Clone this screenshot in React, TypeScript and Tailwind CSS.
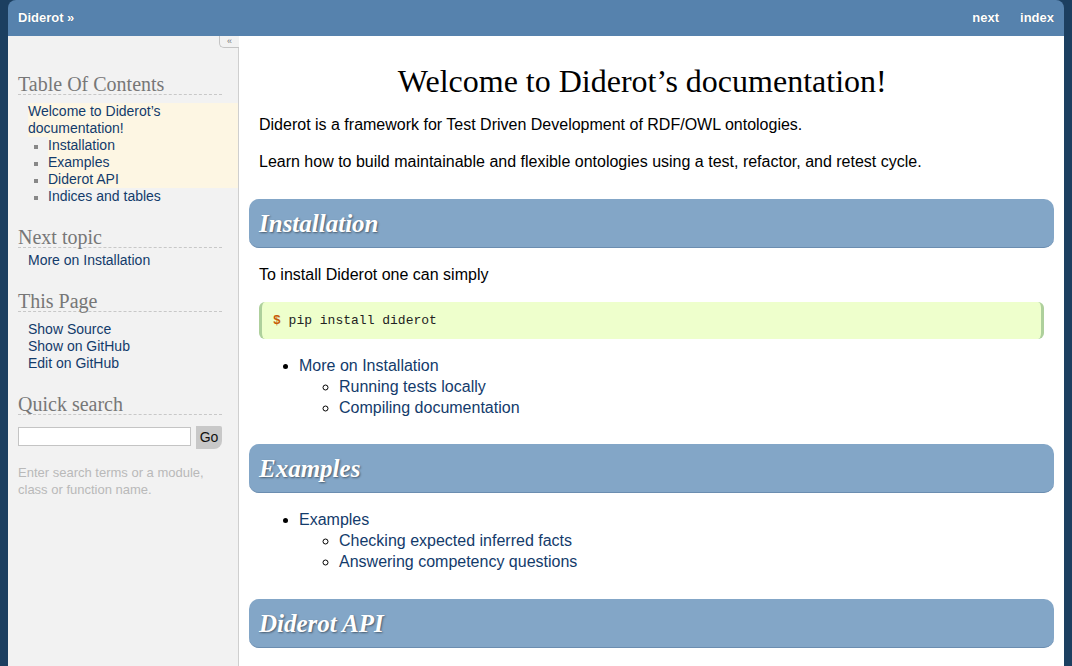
const sans = "font-['Liberation_Sans',Arial,sans-serif]"
const serif = "font-['Liberation_Serif','Times_New_Roman',serif]"
const mono = "font-['Liberation_Mono','Courier_New',monospace]"

function SideHeading({ children }: { children: string }) {
  return (
    <h3 className={`${serif} text-[20px] leading-[20px] text-[#777] border-b border-dashed border-[#c8c8c8] pb-0`}>
      {children}
    </h3>
  )
}

function SectionBar({ title }: { title: string }) {
  return (
    <h2
      className={`${serif} mt-[27px] mb-[16px] h-[49px] flex items-center px-[10px] rounded-[10px] bg-[#83a6c7] border-b border-[#6b8db0] text-white italic font-bold text-[25px] [text-shadow:1px_1px_2px_rgba(0,0,0,0.45)]`}
    >
      {title}
    </h2>
  )
}

const link = 'text-[#133b6b]'

export default function App() {
  return (
    <div className={`${sans} min-h-screen bg-[#1c3f60] px-2`}>
      <div className="h-screen flex flex-col rounded-t-lg overflow-hidden">
        <div className="h-9 shrink-0 bg-[#5682ad] flex items-center justify-between px-[10px] text-white text-[13px] font-bold [text-shadow:0_0_1px_rgba(0,0,0,0.3)]">
          <span>Diderot »</span>
          <div className="flex gap-[21px]">
            <span>next</span>
            <span>index</span>
          </div>
        </div>

        <div className="flex-1 flex min-h-0">
          <aside className="relative w-[231px] shrink-0 bg-[#f2f2f2] border-r border-[#cfcfcf] pl-[10px] pr-[16px] pt-[38px] text-[14px] leading-[17px]">
            <div className="absolute right-[-1px] top-0 w-[20px] h-[12px] border-l border-b border-[#c4c4c4] rounded-bl-[5px] bg-[#f2f2f2] flex items-center justify-center text-[9px] leading-none text-[#777]">
              «
            </div>

            <SideHeading>Table Of Contents</SideHeading>
            <ul className="mt-[8px] pl-[10px] -mr-[16px]">
              <li>
                <div className={`${link} bg-[#fdf6e3]`}>
                  Welcome to Diderot’s
                  <br />
                  documentation!
                </div>
                <ul className="list-[square] pl-[20px] marker:text-[#888] marker:text-[12px]">
                  <li className={`${link} bg-[#fdf6e3]`}>Installation</li>
                  <li className={`${link} bg-[#fdf6e3]`}>Examples</li>
                  <li className={`${link} bg-[#fdf6e3]`}>Diderot API</li>
                  <li className={link}>Indices and tables</li>
                </ul>
              </li>
            </ul>

            <div className="mt-[22px]">
              <SideHeading>Next topic</SideHeading>
              <div className={`${link} mt-[4px] pl-[10px]`}>More on Installation</div>
            </div>

            <div className="mt-[22px]">
              <SideHeading>This Page</SideHeading>
              <ul className="mt-[9px] pl-[10px]">
                <li className={link}>Show Source</li>
                <li className={link}>Show on GitHub</li>
                <li className={link}>Edit on GitHub</li>
              </ul>
            </div>

            <div className="mt-[22px]">
              <SideHeading>Quick search</SideHeading>
              <div className="mt-[11px] flex items-start gap-[5px]">
                <input className="w-[173px] h-[19px] mt-[1px] bg-white border border-[#c4c4c4] outline-none" />
                <button className="w-[30px] h-[23px] bg-[#c8c8c8] rounded-br-[8px] rounded-tr-[2px] text-[14px] text-[#111]">
                  Go
                </button>
              </div>
              <p className="mt-[15px] text-[13px] leading-[17px] text-[#b9b9b9]">
                Enter search terms or a module, class or function name.
              </p>
            </div>
          </aside>

          <main className="flex-1 bg-white px-[10px] overflow-hidden text-[16px] leading-[21px] text-black">
            <h1 className={`${serif} mt-[27px] text-center text-[32px] leading-[36px] text-black`}>
              Welcome to Diderot’s documentation!<span className="invisible pl-[4px]">¶</span>
            </h1>
            <p className="mt-[15px] px-[10px]">
              Diderot is a framework for Test Driven Development of RDF/OWL ontologies.
            </p>
            <p className="mt-[16px] px-[10px]">
              Learn how to build maintainable and flexible ontologies using a test, refactor, and retest cycle.
            </p>

            <SectionBar title="Installation" />
            <p className="px-[10px]">To install Diderot one can simply</p>
            <pre
              className={`${mono} mx-[10px] mt-[17px] py-[10px] pl-[11px] text-[13px] leading-[17px] bg-[#eeffcc] border-x-[3px] border-[#aed09c] rounded-[6px] text-[#222]`}
            >
              <span className="text-[#c65d09] font-bold">$</span> pip install diderot
            </pre>
            <ul className="mt-[16px] -mb-px pl-[50px] list-disc marker:text-black">
              <li className={link}>
                More on Installation
                <ul className="pl-[40px] list-[circle] marker:text-[#777]">
                  <li>Running tests locally</li>
                  <li>Compiling documentation</li>
                </ul>
              </li>
            </ul>

            <SectionBar title="Examples" />
            <ul className="pl-[50px] list-disc marker:text-black">
              <li className={link}>
                Examples
                <ul className="pl-[40px] list-[circle] marker:text-[#777]">
                  <li>Checking expected inferred facts</li>
                  <li>Answering competency questions</li>
                </ul>
              </li>
            </ul>

            <SectionBar title="Diderot API" />
          </main>
        </div>
      </div>
    </div>
  )
}
